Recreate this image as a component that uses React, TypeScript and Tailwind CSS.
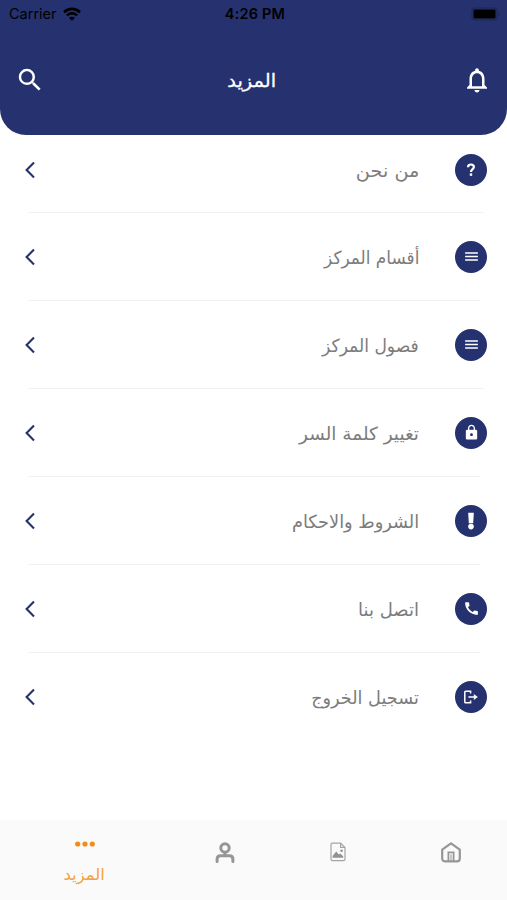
import React from 'react';
import { MdCall, MdLock, MdMenu, MdNotificationsNone, MdSearch } from 'react-icons/md';

interface MenuItem {
  label: string;
  icon: React.ReactNode;
  textClass: string;
  dividerClass: string;
}

function QuestionIcon() {
  return (
    <svg width="10" height="14" viewBox="0 0 10 14" fill="none">
      <path d="M2 4.2C2 2.4 3.2 1.5 4.9 1.5S7.9 2.5 7.9 4.1C7.9 6.2 5 6.3 5 9" stroke="white" strokeWidth="2.2" />
      <rect x="3.8" y="10.4" width="2.4" height="2.4" fill="white" />
    </svg>
  );
}

function ExclamationIcon() {
  return (
    <svg width="8" height="18" viewBox="0 0 8 18" fill="white">
      <path d="M1.2 .8h5.6L6.2 11.2H1.8z" />
      <circle cx="4" cy="14.6" r="2.8" />
    </svg>
  );
}

function ExitIcon() {
  return (
    <svg width="16" height="14" viewBox="0 0 16 14" fill="none" stroke="white" strokeWidth="1.5">
      <path d="M7.6 3.6V1.2H2.6q-.8 0-.8.8v10q0 .8.8.8h5v-2.4" />
      <path d="M5.4 7h6" />
      <path d="M10.8 3.9L14.8 7l-4 3.1z" fill="white" stroke="none" />
    </svg>
  );
}

function WifiIcon() {
  return (
    <svg width="18" height="14" viewBox="0 0 18 14" fill="none" stroke="black" strokeWidth="2.6">
      <path d="M1 5.2C5.6 .8 12.4 .8 17 5.2" />
      <path d="M3.9 8.4c3-2.8 7.2-2.8 10.2 0" />
      <path d="M9 13.8L5.9 10.8c1.7-1.5 4.5-1.5 6.2 0z" fill="black" stroke="none" />
    </svg>
  );
}

function BatteryIcon() {
  return (
    <svg width="30" height="14" viewBox="0 0 30 14">
      <rect x="1" y="1" width="25" height="12" rx="2.5" fill="none" stroke="#1b2452" strokeWidth="1" />
      <rect x="2.5" y="2.5" width="22" height="9" rx="1" fill="black" />
      <path d="M27.5 5v4c1.4-.6 1.4-3.4 0-4z" fill="#1b2452" />
    </svg>
  );
}

function ChevronIcon() {
  return (
    <svg width="12" height="18" viewBox="0 0 12 18" fill="none" stroke="#26326f" strokeWidth="2.1">
      <path d="M10 1.6L2.6 9l7.4 7.4" />
    </svg>
  );
}

function PersonIcon() {
  return (
    <svg width="20" height="22" viewBox="0 0 20 22" fill="none" stroke="#969696" strokeWidth="3" strokeLinecap="round">
      <circle cx="10" cy="6" r="4.2" />
      <path d="M2.1 19.4v-2.2c0-2.2 1.2-3.4 3.4-3.4h9c2.2 0 3.4 1.2 3.4 3.4v2.2" />
      <path d="M10 10.5v2.5" strokeLinecap="butt" />
    </svg>
  );
}

function GalleryIcon() {
  return (
    <svg width="16" height="20" viewBox="0 0 16 20" fill="none" stroke="#a4a4a4" strokeWidth="1.2">
      <path d="M10.6 1.2H2.4c-.9 0-1.4.5-1.4 1.4v14.6c0 .9.5 1.4 1.4 1.4h11.2c.9 0 1.4-.5 1.4-1.4V5.4z" />
      <path d="M10.6 1.2v4.2H15" />
      <path d="M2.6 15.8V14L6.2 9.6l2.6 3 1.4-1 3 2.6v1.6z" fill="#929292" stroke="none" />
      <circle cx="11.6" cy="8.8" r="1.3" fill="#929292" stroke="none" />
    </svg>
  );
}

function HomeIcon() {
  return (
    <svg width="22" height="22" viewBox="0 0 22 22" fill="none" stroke="#969696" strokeWidth="2.2">
      <path d="M2.2 8.6L11 2.4l8.8 6.2v8.8c0 1.8-.9 2.9-2.7 2.9H4.9c-1.8 0-2.7-1.1-2.7-2.9z" strokeLinejoin="round" />
      <path d="M8.4 20v-8.6h5.2V20" strokeWidth="1.8" />
      <path d="M11 13.4V20" strokeWidth="1" />
    </svg>
  );
}

const menuItems: MenuItem[] = [
  { label: 'من نحن', icon: <QuestionIcon />, textClass: 'scale-x-[1.07]', dividerClass: 'mr-[23px]' },
  { label: 'أقسام المركز', icon: <MdMenu size={17} />, textClass: 'scale-x-[0.94]', dividerClass: 'mr-[27px]' },
  { label: 'فصول المركز', icon: <MdMenu size={17} />, textClass: 'scale-x-[0.95]', dividerClass: 'mr-[23px]' },
  { label: 'تغيير كلمة السر', icon: <MdLock size={17} />, textClass: 'scale-x-[1.025]', dividerClass: 'mr-[27px]' },
  { label: 'الشروط والاحكام', icon: <ExclamationIcon />, textClass: 'scale-x-[0.985]', dividerClass: 'mr-[27px]' },
  { label: 'اتصل بنا', icon: <MdCall size={17} />, textClass: 'scale-x-100', dividerClass: 'mr-[27px]' },
  { label: 'تسجيل الخروج', icon: <ExitIcon />, textClass: 'scale-x-[0.98]', dividerClass: 'invisible' },
];

export default function App() {
  return (
    <div className="flex h-[900px] w-[507px] flex-col overflow-hidden bg-white font-['DejaVu_Sans',sans-serif]">
      <header className="h-[135px] shrink-0 rounded-b-[26px] bg-[#26326f]">
        <div className="grid h-7 grid-cols-3 items-center pl-[9px] pr-[6px] font-['Inter',sans-serif] text-[14.5px] text-black">
          <div className="flex items-center gap-[6px]">
            <span>Carrier</span>
            <WifiIcon />
          </div>
          <span className="text-center font-semibold tracking-[0.2px]">4:26 PM</span>
          <div className="flex justify-end">
            <BatteryIcon />
          </div>
        </div>
        <div className="flex h-[104px] items-center justify-between pl-[15px] pr-[15px] text-white">
          <MdSearch size={30} />
          <h1 className="mr-[3px] scale-x-[1.08] text-[18px] [-webkit-text-stroke:0.3px_white]" dir="rtl">المزيد</h1>
          <MdNotificationsNone size={30} />
        </div>
      </header>

      <main className="min-h-0 flex-1">
        {menuItems.map((item, index) => (
          <div key={item.label} className={index === 0 ? 'flex h-[78px] flex-col' : 'flex h-[88px] flex-col'}>
            <div
              dir="rtl"
              className={`flex flex-1 items-center pr-5 pl-6 ${index === 0 ? 'pb-[8px]' : ''}`}
            >
              <span className="flex size-8 shrink-0 items-center justify-center rounded-full bg-[#26326f] text-white">
                {item.icon}
              </span>
              <span className={`mr-9 origin-right whitespace-nowrap pt-px text-[18px] text-[#7c7c7c] ${item.textClass}`}>
                {item.label}
              </span>
              <span className="mr-auto">
                <ChevronIcon />
              </span>
            </div>
            <div className={`ml-7 h-px shrink-0 bg-[#f2f2f2] ${item.dividerClass}`} />
          </div>
        ))}
      </main>

      <nav className="flex h-20 shrink-0 bg-[#fafafa]">
        <div className="flex w-[169px] flex-col items-center pt-[21px] text-[#f4a340]">
          <svg width="20" height="6" viewBox="0 0 20 6" fill="#f28c18">
            <circle cx="2.7" cy="3" r="2.6" />
            <circle cx="10" cy="3" r="2.6" />
            <circle cx="17.3" cy="3" r="2.6" />
          </svg>
          <span className="mt-[16px] scale-x-[1.03] text-[16px] leading-6" dir="rtl">المزيد</span>
        </div>
        <div className="flex flex-1 justify-center pt-[22px]">
          <PersonIcon />
        </div>
        <div className="flex flex-1 justify-center pt-[22px]">
          <GalleryIcon />
        </div>
        <div className="flex flex-1 justify-center pt-[21px]">
          <HomeIcon />
        </div>
      </nav>
    </div>
  );
}
